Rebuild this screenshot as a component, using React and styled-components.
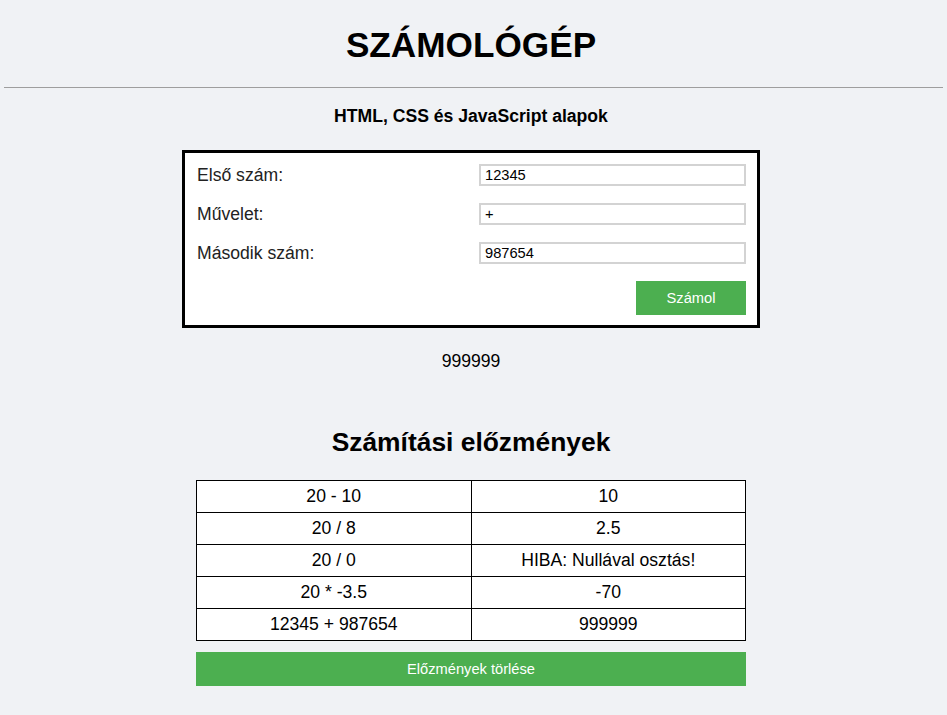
import React, { useState } from 'react';
import styled, { createGlobalStyle } from 'styled-components';

const GlobalStyle = createGlobalStyle`
    body {
        margin: 0;
        background: #f0f2f5;
        font-family: "Liberation Sans", Arial, sans-serif;
        color: #000;
    }
`;
const Page = styled.div`
    min-height: 100vh;
    padding-bottom: 20px;
    box-sizing: border-box;
`;
const Title = styled.h1`
    margin: 0 5px 0 0;
    padding-top: 25px;
    font-size: 35.2px;
    line-height: normal;
    text-align: center;
`;
const Divider = styled.hr`
    margin: 22px 4px 0;
    border: 0;
    height: 1px;
    background: #9e9e9e;
`;
const Content = styled.div`
    display: flex;
    flex-direction: column;
    align-items: center;
    padding-right: 5px;
`;
const Subtitle = styled.div`
    margin-top: 18px;
    font-size: 17.6px;
    font-weight: bold;
    line-height: normal;
`;
const Card = styled.div`
    margin-top: 23px;
    width: 578px;
    box-sizing: border-box;
    background: #fff;
    border: 3px solid #000;
    padding: 11px 11px 10px 12px;
    display: flex;
    flex-direction: column;
    gap: 17px;
`;
const Row = styled.div`
    display: flex;
    align-items: center;
    justify-content: space-between;
    height: 22px;
`;
const Label = styled.label`
    font-size: 17.6px;
    color: #222;
`;
const Input = styled.input`
    width: 267px;
    height: 22px;
    box-sizing: border-box;
    border: 2px solid #d3d3d3;
    padding: 0 4px;
    font-family: "Liberation Sans", Arial, sans-serif;
    font-size: 14.67px;
    color: #000;
    outline: none;
`;
const Actions = styled.div`
    display: flex;
    justify-content: flex-end;
`;
const Button = styled.button`
    width: ${p => p.$wide ? '550px' : '110px'};
    height: 34px;
    border: 0;
    padding: 0;
    background: #4caf50;
    color: #fff;
    font-family: "Liberation Sans", Arial, sans-serif;
    font-size: 14.67px;
    cursor: pointer;
    margin-top: ${p => p.$wide ? '11px' : '0'};
`;
const Result = styled.div`
    margin-top: 23px;
    font-size: 17.6px;
    line-height: normal;
`;
const HistoryTitle = styled.h2`
    margin: 55px 0 0;
    font-size: 26.4px;
    line-height: normal;
`;
const Table = styled.table`
    margin-top: 22px;
    width: 550px;
    border-collapse: collapse;
    background: #fff;
    table-layout: fixed;
`;
const Cell = styled.td`
    border: 1px solid #000;
    height: 32px;
    padding: 0;
    text-align: center;
    font-size: 17.6px;
    box-sizing: border-box;
`;

const history = [
    ['20 - 10', '10'],
    ['20 / 8', '2.5'],
    ['20 / 0', 'HIBA: Nullával osztás!'],
    ['20 * -3.5', '-70'],
    ['12345 + 987654', '999999'],
];

const App = () => {
    const [first, setFirst] = useState('12345');
    const [op, setOp] = useState('+');
    const [second, setSecond] = useState('987654');

    return (
        <Page>
            <GlobalStyle />
            <Title>SZÁMOLÓGÉP</Title>
            <Divider />
            <Content>
                <Subtitle>HTML, CSS és JavaScript alapok</Subtitle>
                <Card>
                    <Row>
                        <Label>Első szám:</Label>
                        <Input value={first} onChange={e => setFirst(e.target.value)} />
                    </Row>
                    <Row>
                        <Label>Művelet:</Label>
                        <Input value={op} onChange={e => setOp(e.target.value)} />
                    </Row>
                    <Row>
                        <Label>Második szám:</Label>
                        <Input value={second} onChange={e => setSecond(e.target.value)} />
                    </Row>
                    <Actions>
                        <Button>Számol</Button>
                    </Actions>
                </Card>
                <Result>999999</Result>
                <HistoryTitle>Számítási előzmények</HistoryTitle>
                <Table>
                    <tbody>
                        {history.map(([expr, res]) => (
                            <tr key={expr}>
                                <Cell>{expr}</Cell>
                                <Cell>{res}</Cell>
                            </tr>
                        ))}
                    </tbody>
                </Table>
                <Button $wide>Előzmények törlése</Button>
            </Content>
        </Page>
    );
};

export default App;
